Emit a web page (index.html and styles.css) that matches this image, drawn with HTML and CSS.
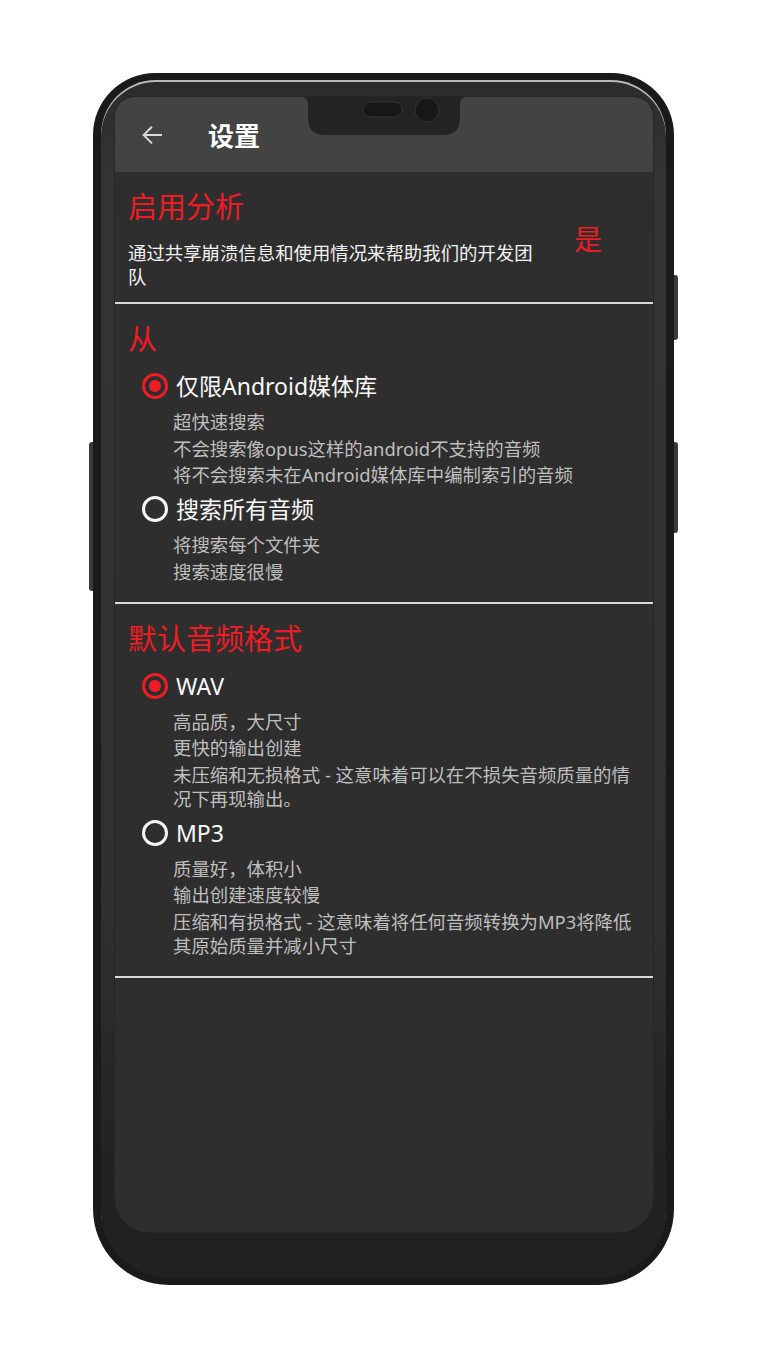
FILE: index.html
```html
<!DOCTYPE html>
<html lang="zh-CN">

<head>
    <meta charset="UTF-8">
    <meta name="viewport" content="width=device-width, initial-scale=1.0">
    <title>设置</title>
    <link rel="stylesheet" href="styles.css">
</head>

<body>

<div class="phone">
    <span class="side-btn btn-right-top"></span>
    <span class="side-btn btn-right-bottom"></span>
    <span class="side-btn btn-left"></span>

    <div class="bezel">
        <div class="screen">

            <svg class="notch" width="170" height="40" viewBox="0 0 170 40">
                <path d="M0 0 H170 C164 0 161 3 161 9 V22 Q161 39 144 39 H26 Q9 39 9 22 V9 C9 3 6 0 0 0 Z" fill="#232323"/>
                <rect x="64" y="6" width="39" height="15" rx="7.5" fill="#171717" stroke="#3a3a3a" stroke-width="0.8"/>
                <circle cx="128" cy="14" r="12" fill="#171717" stroke="#3a3a3a" stroke-width="0.8"/>
            </svg>

            <header class="appbar">
                <svg class="back" width="30" height="30" viewBox="0 0 24 24">
                    <path d="M20 11.2H7.2l5.3-5.3-1.1-1.1L4.2 12l7.2 7.2 1.1-1.1-5.3-5.3H20z" fill="currentColor"/>
                </svg>
                <h1>设置</h1>
            </header>

            <main class="prefs">

                <section class="pref pref-switch">
                    <div class="pref-text">
                        <h2>启用分析</h2>
                        <p>通过共享崩溃信息和使用情况来帮助我们的开发团队</p>
                    </div>
                    <span class="pref-value">是</span>
                </section>

                <section class="pref">
                    <h2>从</h2>
                    <div class="option checked">
                        <span class="radio"></span>
                        <span class="option-label">仅限Android媒体库</span>
                    </div>
                    <div class="option-desc">
                        <p>超快速搜索</p>
                        <p>不会搜索像opus这样的android不支持的音频</p>
                        <p>将不会搜索未在Android媒体库中编制索引的音频</p>
                    </div>
                    <div class="option">
                        <span class="radio"></span>
                        <span class="option-label">搜索所有音频</span>
                    </div>
                    <div class="option-desc">
                        <p>将搜索每个文件夹</p>
                        <p>搜索速度很慢</p>
                    </div>
                </section>

                <section class="pref">
                    <h2>默认音频格式</h2>
                    <div class="option checked">
                        <span class="radio"></span>
                        <span class="option-label">WAV</span>
                    </div>
                    <div class="option-desc">
                        <p>高品质，大尺寸</p>
                        <p>更快的输出创建</p>
                        <p>未压缩和无损格式 - 这意味着可以在不损失音频质量的情况下再现输出。</p>
                    </div>
                    <div class="option">
                        <span class="radio"></span>
                        <span class="option-label">MP3</span>
                    </div>
                    <div class="option-desc">
                        <p>质量好，体积小</p>
                        <p>输出创建速度较慢</p>
                        <p>压缩和有损格式 - 这意味着将任何音频转换为MP3将降低其原始质量并减小尺寸</p>
                    </div>
                </section>

            </main>
        </div>
    </div>
</div>

</body>
</html>
```

FILE: styles.css
```css
body {
    margin: 0;
    background-color: #fff;
    font-family: "Noto Sans", "Noto Sans CJK SC", sans-serif;
}

/* phone frame */

.phone {
    position: relative;
    box-sizing: border-box;
    width: 581px;
    height: 1212px;
    margin: 73px 0 0 93px;
    padding: 7px 8px;
    background-color: #1a1a1a;
    border-radius: 62px 62px 76px 76px;
}

.bezel {
    box-sizing: border-box;
    height: 100%;
    padding: 17px 13px 46px 14px;
    background: linear-gradient(to bottom, #2c2c2c 0%, #333 8%, #303030 70%, #212121 92%);
    border-radius: 55px 55px 68px 68px;
    box-shadow: inset 0 2px 0 #b9b9b9;
}

.side-btn {
    position: absolute;
    width: 4px;
    background-color: #3a3a3a;
}

.btn-right-top {
    left: 581px;
    top: 202px;
    height: 65px;
    border-radius: 0 3px 3px 0;
}

.btn-right-bottom {
    left: 581px;
    top: 369px;
    height: 91px;
    border-radius: 0 3px 3px 0;
}

.btn-left {
    left: -4px;
    top: 369px;
    height: 149px;
    border-radius: 3px 0 0 3px;
}

.screen {
    position: relative;
    height: 100%;
    overflow: hidden;
    background-color: #2e2e2e;
    border-radius: 20px 20px 34px 34px;
    box-shadow: 0 0 0 1px #262626;
}

.notch {
    position: absolute;
    top: -1px;
    left: 184px;
    display: block;
}

/* app bar */

.appbar {
    display: flex;
    align-items: center;
    height: 75px;
    padding-left: 22px;
    background-color: #434343;
}

.back {
    display: block;
    color: #d9d9d9;
}

.appbar h1 {
    margin: 0 0 0 41px;
    font-family: "Noto Sans CJK SC", sans-serif;
    font-size: 26px;
    font-weight: bold;
    line-height: 36px;
    color: #fff;
}

/* preference list */

.pref {
    padding: 17px 13px 18px 13px;
    border-bottom: 2px solid #d9d9d9;
}

.pref h2 {
    margin: 0;
    font-size: 29px;
    font-weight: normal;
    line-height: 36px;
    color: #ee1c24;
}

.pref-switch {
    display: flex;
    align-items: center;
    padding-bottom: 13px;
}

.pref-text {
    flex: 1;
}

.pref-text p {
    margin: 16px 0 0;
    font-size: 18.4px;
    line-height: 24px;
    color: #f2f2f2;
}

.pref-value {
    margin: 0 38px 0 30px;
    font-size: 28px;
    line-height: 36px;
    color: #ee1c24;
}

.option {
    display: flex;
    align-items: center;
    height: 32px;
    margin: 6px 0 0 14px;
}

.pref h2 + .option {
    margin-top: 13px;
}

.radio {
    box-sizing: border-box;
    width: 26px;
    height: 26px;
    border: 3px solid #f5f5f5;
    border-radius: 50%;
}

.option.checked .radio {
    border-color: #ee1c24;
    background: radial-gradient(circle, #ee1c24 0, #ee1c24 5.5px, transparent 6.5px);
}

.option-label {
    margin-left: 8px;
    font-size: 23px;
    line-height: 32px;
    color: #f8f8f8;
}

.option-desc {
    margin: 8px 0 0 45px;
    font-size: 18.4px;
    color: #bfbfbf;
}

.option-desc p {
    margin: 0;
    line-height: 24px;
}

.option-desc p + p {
    margin-top: 2.5px;
}
```
